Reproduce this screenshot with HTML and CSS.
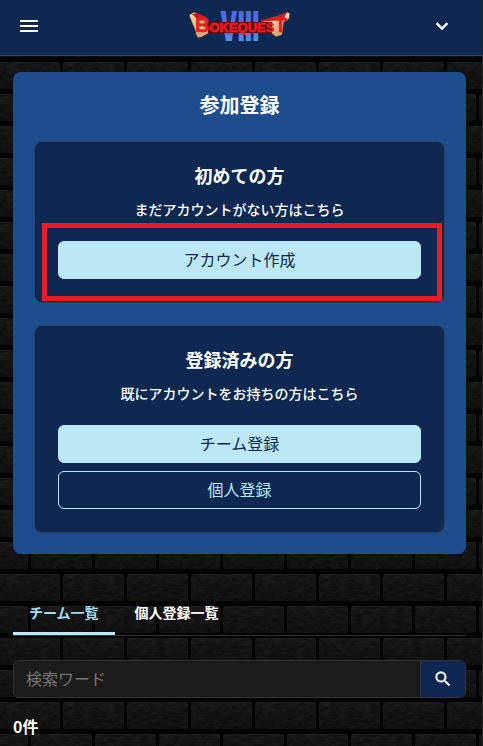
FILE: index.html
```html
<!DOCTYPE html>
<html lang="ja">
<head>
  <meta charset="UTF-8" />
  <meta name="viewport" content="width=device-width, initial-scale=1.0"/>
  <title>参加登録 | BOKEQUEST VIII</title>
  <link rel="stylesheet" href="styles.css">
</head>
<body>

  <header class="header">
    <button class="icon-btn" type="button" aria-label="メニュー">
      <svg viewBox="0 0 24 24" width="24" height="24"><path d="M3 18h18v-2H3v2zm0-5h18v-2H3v2zm0-7v2h18V6H3z"/></svg>
    </button>
    <a class="logo" href="#" aria-label="BOKEQUEST VIII">
      <svg viewBox="0 0 102 36" width="102" height="36">
        <defs>
          <linearGradient id="numeral" x1="0" y1="0" x2="0" y2="1">
            <stop offset="0" stop-color="#5d60f2"/>
            <stop offset="0.6" stop-color="#4474dc"/>
            <stop offset="1" stop-color="#5cc0e2"/>
          </linearGradient>
          <linearGradient id="bone" x1="0" y1="0" x2="0" y2="1">
            <stop offset="0" stop-color="#f6dcae"/>
            <stop offset="1" stop-color="#cfa478"/>
          </linearGradient>
        </defs>
        <text class="logo-numeral" x="31" y="33">Ⅷ</text>
        <path fill="url(#bone)" stroke="#3a1d1a" stroke-width="0.6" d="M0 7l5-3 11 5 3 13 12 1-11 2-7 4-4 1-2-3-1-5-3-7z"/>
        <path fill="url(#bone)" stroke="#3a1d1a" stroke-width="0.6" d="M74 12l14-4 11-4 2 2-1 5-5 3-2 13-6 2-5-4-8-1z"/>
        <path fill="#d4191d" d="M3 6l5-1 9 4 3 3-12-1zM72 12l14-3 12-5-3 6-5 2-18 2z"/>
        <path fill="#5e1016" d="M19 14h64v11H19z"/>
        <text class="logo-name" x="6" y="24"><tspan class="logo-cap">B</tspan>OKEQUES<tspan class="logo-cap">T</tspan></text>
      </svg>
    </a>
    <button class="icon-btn" type="button" aria-label="開く">
      <svg viewBox="0 0 24 24" width="24" height="24"><path stroke="currentColor" stroke-width="0.5" d="M7.4 8.6L12 13.2l4.6-4.6L18 10l-6 6-6-6z"/></svg>
    </button>
  </header>

  <main class="main">
    <section class="panel">
      <h1>参加登録</h1>

      <div class="card">
        <h2>初めての方</h2>
        <p>まだアカウントがない方はこちら</p>
        <div class="buttons highlight">
          <button class="btn" type="button">アカウント作成</button>
        </div>
      </div>

      <div class="card">
        <h2>登録済みの方</h2>
        <p>既にアカウントをお持ちの方はこちら</p>
        <div class="buttons">
          <button class="btn" type="button">チーム登録</button>
          <button class="btn btn-outline" type="button">個人登録</button>
        </div>
      </div>
    </section>

    <nav class="tabs">
      <a class="tab active" href="#team">チーム一覧</a>
      <a class="tab" href="#solo">個人登録一覧</a>
    </nav>

    <form class="search">
      <input type="search" aria-label="検索ワード" placeholder="検索ワード">
      <button type="submit" aria-label="検索">
        <svg viewBox="0 0 24 24" width="20" height="20"><path stroke="currentColor" stroke-width="0.4" d="M15.5 14h-.79l-.28-.27A6.47 6.47 0 0 0 16 9.5 6.5 6.5 0 1 0 9.5 16c1.61 0 3.09-.59 4.23-1.57l.27.28v.79l5 4.99L20.49 19l-4.99-5zm-6 0C7.01 14 5 11.99 5 9.5S7.01 5 9.5 5 14 7.01 14 9.5 11.99 14 9.5 14z"/></svg>
      </button>
    </form>

    <p class="count">0件</p>
  </main>

</body>
</html>
```
FILE: styles.css
```css
* {
  box-sizing: border-box;
}

body {
  margin: 0;
  min-height: 100vh;
  border-right: 1px solid #222;
  font-family: "Noto Sans CJK JP", sans-serif;
  font-size: 16px;
  color: #fff;
  background-color: #020202;
  /* brick wall, two staggered rows per tile */
  background-image: url("data:image/svg+xml,%3Csvg xmlns='http://www.w3.org/2000/svg' width='256' height='128'%3E%3Cdefs%3E%3Cfilter id='n' x='0' y='0' width='100%25' height='100%25'%3E%3CfeTurbulence type='fractalNoise' baseFrequency='.12 .35' numOctaves='4' stitchTiles='stitch'/%3E%3CfeColorMatrix values='0 0 0 0 0 0 0 0 0 0 0 0 0 0 0 1.6 0 0 0 -.35'/%3E%3C/filter%3E%3ClinearGradient id='g' x2='0' y2='1'%3E%3Cstop stop-color='%23222222'/%3E%3Cstop offset='.2' stop-color='%231b1b1b'/%3E%3Cstop offset='1' stop-color='%23151515'/%3E%3C/linearGradient%3E%3Cpattern id='b' width='64' height='64' patternUnits='userSpaceOnUse'%3E%3Crect x='-1' width='61' height='27' rx='2' fill='url(%23g)'/%3E%3Crect x='63' width='61' height='27' rx='2' fill='url(%23g)'/%3E%3Crect x='-33' y='32' width='61' height='27' rx='2' fill='url(%23g)'/%3E%3Crect x='31' y='32' width='61' height='27' rx='2' fill='url(%23g)'/%3E%3C/pattern%3E%3C/defs%3E%3Crect width='256' height='128' fill='url(%23b)'/%3E%3Crect width='256' height='128' filter='url(%23n)' opacity='.5'/%3E%3C/svg%3E");
  background-position: 0 -2px;
}

h1,
h2,
p {
  margin: 0;
}

button {
  font: inherit;
  cursor: pointer;
}

svg {
  display: block;
  fill: currentColor;
}

.header {
  display: flex;
  align-items: center;
  justify-content: space-between;
  height: 56px;
  padding: 0 28px 3px 17px;
  background: #0e2851;
  border-bottom: 1px solid #304668;
}

.icon-btn {
  padding: 0;
  border: 0;
  background: none;
  color: #fff;
}

.logo {
  margin-left: 8px;
}

.logo svg {
  overflow: visible;
}

.logo-numeral {
  fill: url(#numeral);
  font-size: 40px;
  font-weight: bold;
}

.logo-name {
  fill: #ee1c1f;
  stroke: #ee1c1f;
  stroke-width: 0.5px;
  font-family: "Liberation Sans", sans-serif;
  font-size: 13px;
  font-weight: bold;
}

.logo-cap {
  font-size: 20px;
}

.main {
  padding: 16px 16px 0 13px;
}

.panel {
  padding: 21px;
  border-radius: 8px;
  background: #1d4d8d;
  text-align: center;
}

.panel h1 {
  margin-bottom: 24px;
  font-size: 20px;
  line-height: 24px;
}

.card {
  padding: 23px;
  border: 1px solid #2b4063;
  border-radius: 8px;
  background: #0e2851;
}

.card + .card {
  margin-top: 22px;
}

.card h2 {
  margin-bottom: 14px;
  font-size: 18px;
  line-height: 20px;
}

.card p {
  margin-bottom: 22px;
  font-size: 14px;
  font-weight: 500;
  line-height: 20px;
}

.buttons {
  display: grid;
  gap: 8px;
}

.btn {
  height: 38px;
  padding: 0 0 2px;
  border: 1px solid #bce8f5;
  border-radius: 6px;
  background: #bce8f5;
  color: #0e2851;
  line-height: 24px;
}

.btn-outline {
  background: transparent;
  color: #bce8f5;
}

/* red frame round the button to press */
.highlight {
  position: relative;
}

.highlight::after {
  content: "";
  position: absolute;
  inset: -18px -21px -22px -16px;
  border: 5px solid #ed1c24;
  pointer-events: none;
}

.tabs {
  display: flex;
  gap: 4px;
  margin-top: 40px;
  border-bottom: 1px solid #333;
}

.tab {
  padding: 8px 16px 10px;
  border-bottom: 3px solid transparent;
  color: #fff;
  font-size: 14px;
  font-weight: bold;
  line-height: 20px;
  text-decoration: none;
}

.tab.active {
  border-color: #bce8f5;
  color: #a5dcee;
}

.search {
  display: flex;
  height: 38px;
  margin-top: 24px;
  border: 1px solid #333;
  border-radius: 6px;
  background: #1b1b1b;
  overflow: hidden;
}

.search input {
  flex: 1;
  min-width: 0;
  padding: 0 12px 2px;
  border: 0;
  outline: 0;
  background: none;
  color: #fff;
  font: inherit;
}

.search input::placeholder {
  color: #777;
}

.search button {
  display: grid;
  place-items: center;
  width: 45px;
  padding: 0;
  border: 0;
  border-left: 1px solid #333;
  background: #0e2851;
  color: #fff;
}

.count {
  margin-top: 16px;
  font-weight: bold;
  line-height: 24px;
}
```
